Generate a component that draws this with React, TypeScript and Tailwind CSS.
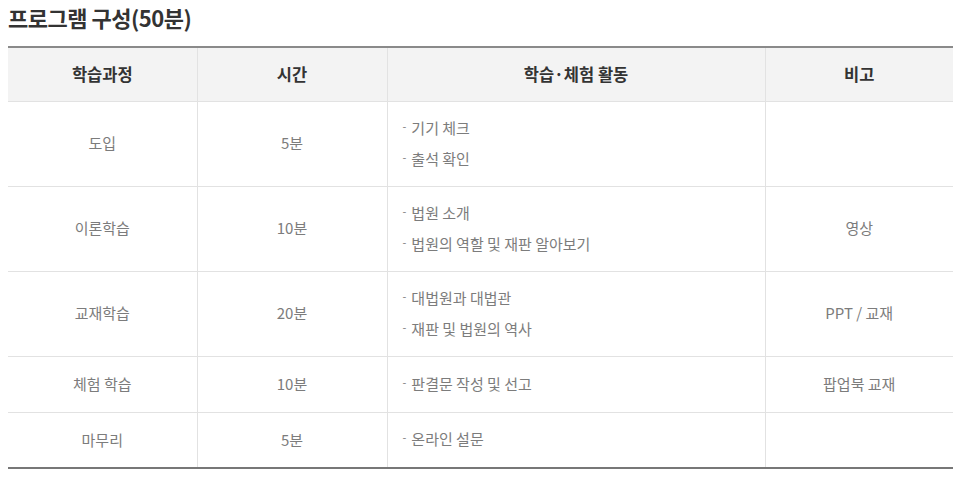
const rows: { stage: string; time: string; acts: string[]; note: string }[] = [
  { stage: "도입", time: "5분", acts: ["기기 체크", "출석 확인"], note: "" },
  { stage: "이론학습", time: "10분", acts: ["법원 소개", "법원의 역할 및 재판 알아보기"], note: "영상" },
  { stage: "교재학습", time: "20분", acts: ["대법원과 대법관", "재판 및 법원의 역사"], note: "PPT / 교재" },
  { stage: "체험 학습", time: "10분", acts: ["판결문 작성 및 선고"], note: "팝업북 교재" },
  { stage: "마무리", time: "5분", acts: ["온라인 설문"], note: "" },
];

export default function App() {
  return (
    <div
      className="w-[966px] h-[485px] bg-white px-2 pt-[2px]"
      style={{ fontFamily: '"Noto Sans CJK KR", "Noto Sans", sans-serif' }}
    >
      <h2 className="text-[22px] font-bold leading-[30px] text-[#333] tracking-[-0.5px]">
        프로그램 구성(50분)
      </h2>

      <table className="mt-[14px] w-[945px] table-fixed border-collapse border-t-2 border-b-2 border-t-[#8a8a8a] border-b-[#777]">
        <colgroup>
          <col className="w-[189px]" />
          <col className="w-[190px]" />
          <col className="w-[378px]" />
          <col className="w-[188px]" />
        </colgroup>
        <thead>
          <tr className="h-[54px] bg-[#f3f3f3] text-[16.5px] font-bold text-[#333]">
            <th className="border-r border-[#e2e2e2] font-bold">학습과정</th>
            <th className="border-r border-[#e2e2e2] font-bold">시간</th>
            <th className="border-r border-[#e2e2e2] font-bold">학습·체험 활동</th>
            <th className="font-bold">비고</th>
          </tr>
        </thead>
        <tbody className="text-[15px] text-[#7c7c7c]">
          {rows.map((r) => (
            <tr
              key={r.stage}
              className={`border-t border-[#e2e2e2] ${r.acts.length > 1 ? "h-[85px]" : "h-[56px]"}`}
            >
              <td className="border-r border-[#e2e2e2] text-center">{r.stage}</td>
              <td className="border-r border-[#e2e2e2] text-center">{r.time}</td>
              <td className="border-r border-[#e2e2e2] pl-[15px]">
                {r.acts.map((a) => (
                  <div key={a} className="leading-[29px]">
                    <span className="text-[11px] relative -top-[3px] mr-[5px]">-</span>
                    {a}
                  </div>
                ))}
              </td>
              <td className="text-center">{r.note}</td>
            </tr>
          ))}
        </tbody>
      </table>
    </div>
  );
}
